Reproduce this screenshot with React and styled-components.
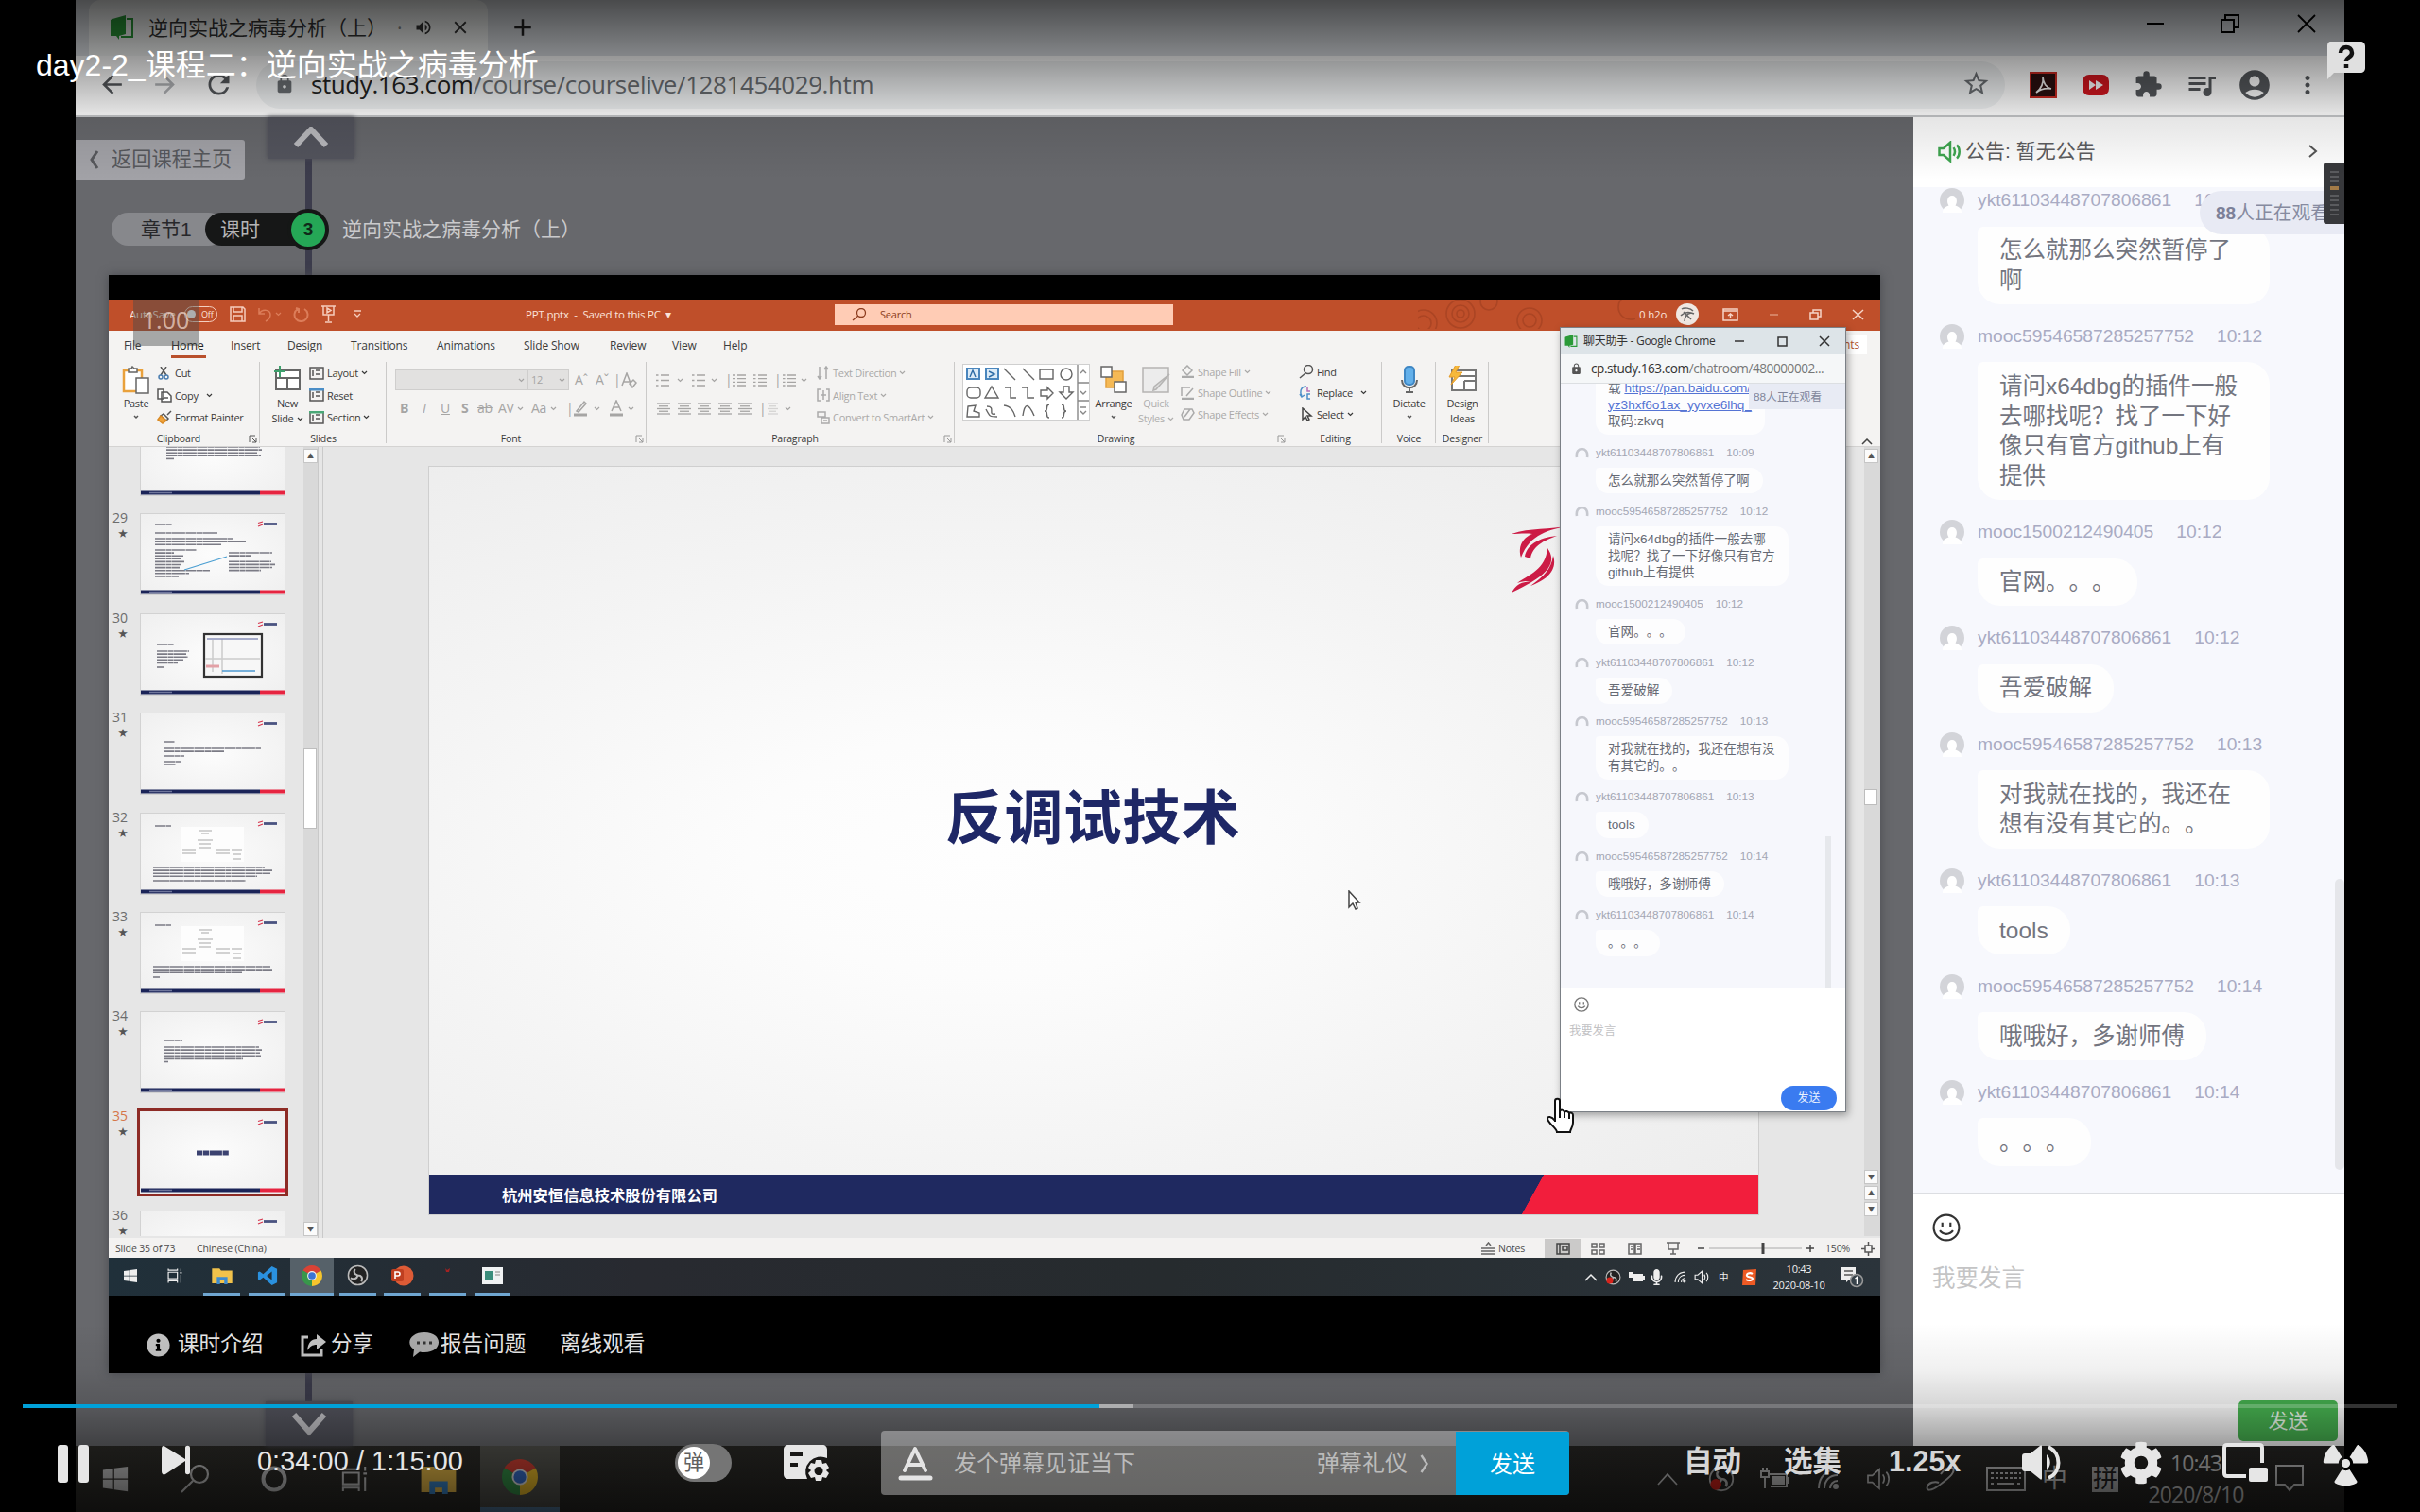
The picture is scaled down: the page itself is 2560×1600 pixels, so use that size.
import React from "react";
import styled, { createGlobalStyle, css } from "styled-components";
import {
  MdArrowBack, MdArrowForward, MdRefresh, MdLock, MdStarBorder, MdExtension,
  MdQueueMusic, MdAccountCircle, MdMoreVert, MdVolumeUp, MdClose, MdAdd,
} from "react-icons/md";
import { FaWindows, FaRadiation, FaCog, FaMicrophone, FaInfoCircle } from "react-icons/fa";

const sans = `"Liberation Sans", "Noto Sans CJK SC", sans-serif`;
const ui = `"Open Sans", "Noto Sans CJK SC", sans-serif`;

const Global = createGlobalStyle`
  html, body { margin: 0; background: #000; }
  * { box-sizing: border-box; }
  svg { display: block; flex: none; }
  body { font-family: ${sans}; text-spacing-trim: space-all; }
`;

/* Grid tracks whose columns begin at the given x values, measured from origin. */
const stops = (origin, xs) => css`
  display: grid;
  padding-left: ${xs[0] - origin}px;
  grid-template-columns: ${xs.slice(1).map((x, i) => `${x - xs[i]}px`).join(" ")} 1fr;
  align-items: center;
  white-space: nowrap;
`;

const Screen = styled.main`
  position: relative;
  width: 2560px;
  height: 1600px;
  overflow: hidden;
  background: #000;
  line-height: 1;
`;
const Video = styled.section`
  width: 2400px;
  height: 1600px;
  margin: 0 auto;
  display: flex;
  flex-direction: column;
  overflow: hidden;
`;

/* ---------- outer browser ---------- */
const TabStrip = styled.div`
  height: 59px;
  flex: none;
  display: flex;
  justify-content: space-between;
  background: #dee1e6;
  color: #222;
`;
const BrowserTab = styled.div`
  width: 422px;
  height: 59px;
  margin-left: 14px;
  border-radius: 12px 12px 0 0;
  background: #f6f8f7;
  font: 21px/24px ${ui};
  color: #333;
  ${() => stops(94, [116, 157, 420, 438, 476])}
  padding-bottom: 1px;
`;
const Faint = styled.span`color: #888;`;
const TabGroup = styled.div`display: flex; align-items: center;`;
const NewTab = styled.span`margin-left: 22px; margin-bottom: 2px;`;
const WindowButtons = styled.div`
  width: 212px;
  height: 50px;
  ${() => stops(2268, [2271, 2349, 2430])}
`;
const Toolbar = styled.div`
  height: 65px;
  flex: none;
  padding-bottom: 2px;
  background: #fff;
  border-bottom: 2px solid #c6c8ca;
  color: #55585c;
  ${() => stops(80, [103, 159, 215, 271, 2141, 2199, 2257, 2311, 2366, 2426])}
`;
const Omnibox = styled.div`
  width: 1850px;
  height: 50px;
  border-radius: 25px;
  background: #f1f3f4;
  padding: 0 15px 2px 19px;
  display: flex;
  align-items: center;
  font: 26px/30px ${ui};
  letter-spacing: -0.42px;
  color: #6b6f73;
  b { font-weight: 400; color: #222; margin-left: 17px; }
  svg:last-child { margin-left: auto; }
`;

/* ---------- course page ---------- */
const Page = styled.div`height: 1406px; display: flex; flex: none;`;
const Lesson = styled.div`
  position: relative;
  width: 1944px;
  height: 1406px;
  background: #67686c;
  display: flex;
  flex-direction: column;
`;
const TimeLine = styled.i`
  position: absolute;
  left: 243px;
  top: 0;
  width: 7px;
  height: 1360px;
  background: #3c3c4c;
`;
const LessonTop = styled.div`position: relative; display: flex; height: 101px; flex: none;`;
const BackButton = styled.div`
  width: 179px;
  height: 42px;
  margin-top: 24px;
  padding-left: 14px;
  display: flex;
  align-items: center;
  gap: 13px;
  border-radius: 0 3px 3px 0;
  background: #a2a2a7;
  color: #57585c;
  font: 21.2px/24px ${sans};
  white-space: nowrap;
`;
const ArrowTab = styled.div`
  width: 92px;
  height: ${(p) => p.$h}px;
  margin: ${(p) => p.$mt || 0}px 0 0 ${(p) => p.$ml}px;
  display: grid;
  place-items: center;
  background: #53545d;
  box-shadow: 0 0 5px #4b4c54;
`;
const Crumbs = styled.div`
  position: relative;
  height: 66px;
  flex: none;
  padding-left: 38px;
  display: flex;
  font: 21px/35px ${sans};
  white-space: nowrap;
`;
const Chapter = styled.span`
  width: 120px;
  height: 35px;
  padding-left: 31px;
  border-radius: 18px;
  background: #87888c;
  color: #27272a;
`;
const Period = styled.span`
  width: 110px;
  height: 35px;
  margin-left: -21px;
  padding-left: 16px;
  border-radius: 18px 0 0 18px;
  background: #161717;
  color: #b4b4b6;
`;
const Step = styled.span`
  width: 44px;
  height: 44px;
  margin: -4px 0 0 -23px;
  border: 4px solid #151716;
  border-radius: 50%;
  background: #25a756;
  color: #10291a;
  font: bold 19px/36px ${sans};
  text-align: center;
`;
const CrumbTitle = styled.span`margin-left: 14px; color: #cacacc;`;

const Player = styled.div`
  position: relative;
  width: 1874px;
  height: 1162px;
  flex: none;
  margin-left: 35px;
  padding-top: 26px;
  background: #000;
  box-shadow: 0 0 10px #4a4b50;
`;
const PlayerFooter = styled.div`
  height: 82px;
  margin-top: 11px;
  font: 22.6px/26px ${sans};
  color: #e8e8e8;
  ${() => stops(115, [155, 188, 317, 350, 433, 466, 592])}
`;

/* ---------- PowerPoint ---------- */
const Ppt = styled.div`height: 1054px; display: flex; flex-direction: column; font-family: ${ui}; overflow: hidden;`;
const PptTitle = styled.div`
  height: 33px;
  flex: none;
  padding-bottom: 2px;
  background: #bf4f2a;
  color: #fbe3da;
  font-size: 11.5px;
  letter-spacing: -0.2px;
  ${() => stops(115, [137, 195, 243, 272, 291, 310, 340, 374, 556, 883, 1500, 1734, 1773, 1822, 1871, 1914, 1959])}
`;
const Toggle = styled.span`
  width: 35px;
  height: 17px;
  border: 1.5px solid #f4cfc0;
  border-radius: 9px;
  display: flex;
  align-items: center;
  gap: 6px;
  padding-left: 2px;
  font-size: 9px;
  i { width: 9px; height: 9px; border-radius: 50%; background: #fff; }
`;
const SearchBox = styled.span`
  width: 358px;
  height: 22px;
  background: #ffccb5;
  color: #8d3d20;
  display: flex;
  align-items: center;
  gap: 14px;
  padding-left: 18px;
  font-size: 11px;
`;
const PptTabs = styled.div`
  height: 31px;
  flex: none;
  background: #f4f3f2;
  color: #3c3c3c;
  font-size: 12px;
  letter-spacing: -0.15px;
  padding-bottom: 2px;
  ${() => stops(115, [131, 181, 244, 304, 371, 462, 554, 645, 711, 765, 1888])}
`;
const PptTab = styled.span`
  height: 28px;
  line-height: 29px;
  justify-self: start;
  border-bottom: 3px solid ${(p) => (p.$on ? "#b9502c" : "transparent")};
  ${(p) => p.$on && "color:#222; width:37px; font-size:12.5px;"}
`;
const Comments = styled.span`
  width: 87px;
  padding: 4px 8px;
  text-align: right;
  background: #fff;
  color: #b4532f;
`;
const Ribbon = styled.div`
  height: 92px;
  flex: none;
  display: flex;
  padding-top: 2px;
  background: #f4f3f2;
  border-bottom: 1px solid #d4d3d2;
  font-size: 11px;
  letter-spacing: -0.3px;
  color: #3a3a3a;
`;
const Group = styled.div`
  width: ${(p) => p.$w}px;
  flex: none;
  height: 90px;
  display: flex;
  flex-direction: column;
  background: linear-gradient(#cbcac9, #cbcac9) right top / 1px 86px no-repeat;
`;
const GroupBody = styled.div`height: 74px; display: flex; padding-left: ${(p) => p.$pl || 0}px;`;
const GroupLabel = styled.div`
  height: 15px;
  line-height: 15px;
  font-size: 10.5px;
  letter-spacing: -0.15px;
  display: flex;
  align-items: center;
  justify-content: ${(p) => (p.$launch ? "space-between" : "center")};
  padding-right: ${(p) => (p.$launch ? 3 : 0)}px;
  &::before { content: ""; display: ${(p) => (p.$launch ? "block" : "none")}; }
`;
const Big = styled.div`
  width: ${(p) => p.$w}px;
  display: flex;
  flex-direction: column;
  align-items: center;
  padding-top: 4px;
  line-height: 16px;
  color: ${(p) => (p.$off ? "#b0afae" : "#3a3a3a")};
  white-space: nowrap;
`;
const BigIcon = styled.div`height: 32px;`;
const Stack = styled.div`
  margin-left: ${(p) => p.$ml}px;
  margin-top: ${(p) => p.$mt || 0}px;
  display: grid;
  height: ${(p) => p.$h || 70.5}px;
  grid-template-rows: repeat(3, 1fr);
  color: ${(p) => (p.$off ? "#aaa9a8" : "#3a3a3a")};
`;
const Command = styled.div`
  display: flex;
  align-items: center;
  gap: ${(p) => p.$gap || 3}px;
  white-space: nowrap;
`;
const IconRows = styled.div`
  width: ${(p) => p.$w}px;
  padding-top: 8px;
  display: flex;
  flex-direction: column;
  gap: 8px;
  color: #a6a5a4;
`;
const FontRow = styled.div`height: 22px; font-size: 14px; ${(p) => stops(p.$from, p.$at)}`;
const Combo = styled.span`
  height: 22px;
  width: ${(p) => p.$w}px;
  background: #e2e1e0;
  border: 1px solid #cfcecd;
  font-size: 11px;
  line-height: 20px;
  padding: 0 3px;
  display: flex;
  align-items: center;
  justify-content: space-between;
`;
const ShapeBox = styled.div`width: 135px; height: 60px; margin-top: 2px; background: #fff; border: 1px solid #cfcfcf;`;

const Work = styled.div`height: 837px; flex: none; display: flex; background: #e6e6e6; overflow: hidden;`;
const Thumbs = styled.div`width: 206px; height: 835px; overflow: hidden;`;
const ThumbList = styled.div`margin-top: -34px;`;
const ThumbRow = styled.div`height: 105.4px; display: flex; padding-left: 4px;`;
const ThumbNo = styled.div`
  width: 30px;
  font: 14px/14px ${ui};
  margin-top: -3px;
  color: ${(p) => (p.$on ? "#d5764a" : "#6c6c6c")};
  span { display: block; padding: 3px 0 0 6px; font-size: 10px; line-height: 12px; color: #555; }
`;
const ThumbFrame = styled.div`
  width: 152px;
  height: 85px;
  background: radial-gradient(#fcfcfc, #efefef);
  box-shadow: ${(p) => (p.$on ? "0 0 0 1px #eee, 0 0 0 4px #8d2b25" : "0 0 0 1px #d2d2d2")};
`;
const ScrollTrack = styled.div`
  width: ${(p) => p.$w}px;
  height: 835px;
  padding-top: 2px;
  background: #d9d9d9;
  display: flex;
  flex-direction: column;
`;
const ScrollKey = styled.div`
  height: 15px;
  width: 15px;
  margin-top: ${(p) => p.$mt || 0}px;
  background: #fbfbfb;
  border: 1px solid #c6c6c6;
  display: grid;
  place-items: center;
  font-size: 7px;
  color: #555;
`;
const ScrollThumb = styled.div`
  width: 14px;
  height: ${(p) => p.$h}px;
  margin-top: ${(p) => p.$mt}px;
  background: #fff;
  border: 1px solid #bdbdbd;
`;
const Splitter = styled.div`width: 6px; border: solid #c9c9c9; border-width: 0 1px; margin: 0;`;
const Canvas = styled.div`width: 1630px; padding: 21px 0 0 112px;`;
const Slide = styled.div`
  width: 1406px;
  height: 791px;
  display: flex;
  flex-direction: column;
  background: radial-gradient(ellipse at 42% 52%, #fefefe 0%, #fcfcfc 22%, #f4f4f4 55%, #ebebeb 100%);
  box-shadow: 0 0 0 1px #cfcfcf;
`;
const SlideHead = styled.div`height: 140px; padding: 62px 0 0 1145px;`;
const SlideTitle = styled.h1`
  margin: 195px 0 0 546px;
  height: 64px;
  font: 700 62px/64px "Noto Sans CJK SC", sans-serif;
  color: #1e2766;
  letter-spacing: 0.4px;
`;
const SlideFoot = styled.div`
  height: 42px;
  margin-top: auto;
  padding-left: 77px;
  background: linear-gradient(119deg, #1f2960 0 1031px, #f21e3c 1031.6px);
  color: #fff;
  font: 700 16.3px/42px "Noto Sans CJK SC", sans-serif;
`;
const Status = styled.div`
  height: 21px;
  flex: none;
  padding-top: 1px;
  background: #f3f2f1;
  color: #4c4c4c;
  font-size: 10.5px;
  letter-spacing: -0.15px;
  ${() => stops(115, [122, 208, 1567, 1585, 1634, 1683, 1722, 1762, 1796, 1808, 1911, 1931, 1969])}
`;
const ViewOn = styled.span`width: 38px; height: 20px; background: #cbcac9; display: grid; place-items: center;`;
const InnerTaskbar = styled.div`
  height: 40px;
  flex: none;
  color: #eee;
  font-size: 10.5px;
  background: linear-gradient(90deg, #20303a, #282a30 30%, #262b2e 60%, #2b343b);
  ${() => stops(115, [115, 163, 215, 263, 307, 359, 406, 454, 502, 1674, 1698, 1722, 1744, 1771, 1792, 1818, 1842, 1870, 1947])}
`;
const TaskIcon = styled.span`
  width: ${(p) => p.$w || 39}px;
  height: 40px;
  display: grid;
  place-items: center;
  background: ${(p) => (p.$on ? "#566169" : "transparent")};
  border-bottom: 3px solid ${(p) => (p.$run ? "#6fa6d1" : "transparent")};
`;
const InnerClock = styled.span`width: 66px; text-align: center; line-height: 17px; letter-spacing: -0.25px; font-size: 11px;`;

/* ---------- floating chat window ---------- */
const Popup = styled.div`
  position: absolute;
  left: 1650px;
  top: 346px;
  width: 303px;
  height: 831px;
  display: flex;
  flex-direction: column;
  background: #fff;
  border: 1px solid #7b8086;
  box-shadow: 2px 3px 8px rgba(0, 0, 0, 0.35);
`;
const PopupBar = styled.div`
  height: 28px;
  flex: none;
  background: #dde4e8;
  color: #333;
  font: 12px/16px ${ui};
  letter-spacing: -0.3px;
  ${() => stops(1651, [1655, 1675, 1834, 1880, 1924])}
`;
const PopupUrl = styled.div`
  height: 31px;
  flex: none;
  background: #f5f7f8;
  border-bottom: 1px solid #dcdfe2;
  color: #777;
  font: 13.6px/18px ${ui};
  letter-spacing: -0.45px;
  ${() => stops(1651, [1661, 1683])}
  b { font-weight: 400; color: #333; }
`;
const PopupChat = styled.div`position: relative; height: 639px; flex: none; overflow: hidden; background: #f6f7fc;`;
const PopupList = styled.div`margin: -9px 0 0 37px;`;
const SmallHead = styled.div`
  height: 14px;
  margin: 0 0 9px -22px;
  display: flex;
  align-items: center;
  gap: 7px;
  font: 11.75px/14px ${sans};
  color: #a3a6b3;
  white-space: nowrap;
  time { margin-left: 6px; }
`;
const SmallBubble = styled.div`
  width: max-content;
  padding: 5px 14px 5px 13px;
  margin-bottom: 11.6px;
  border-radius: 4px 14px 14px;
  background: #fdfdfe;
  color: #666a74;
  font: 13.6px/17.7px ${sans};
  white-space: pre;
  u { color: #5574d4; }
`;
const PopupBadge = styled.div`
  position: absolute;
  right: 0;
  top: 0;
  width: 102px;
  height: 27px;
  padding-left: 5px;
  background: #e8ebf4;
  color: #81869a;
  font: 11.8px/28px ${sans};
`;
const PopupThumb = styled.i`position: absolute; right: 15px; bottom: 0; width: 6px; height: 160px; background: #e6e8ec;`;
const PopupInput = styled.div`
  flex: 1;
  border-top: 1px solid #d6dbe0;
  padding: 9px 9px 1px;
  display: flex;
  flex-direction: column;
  font: 12.3px/14px ${sans};
  color: #c2c2c4;
  svg { margin: 0 0 13px 5px; }
`;
const PopupSend = styled.div`
  align-self: flex-end;
  margin-top: auto;
  width: 59px;
  height: 26px;
  border-radius: 13px;
  background: #3a7bf0;
  color: #eaf2ff;
  font: 12px/26px ${sans};
  text-align: center;
`;

/* ---------- side chat ---------- */
const Side = styled.aside`width: 456px; height: 1406px; display: flex; flex-direction: column; background: #fff;`;
const Notice = styled.div`
  height: 74px;
  flex: none;
  padding-bottom: 2px;
  font: 21px/24px ${sans};
  color: #5d5d60;
  ${() => stops(2024, [2048, 2079, 2441])}
`;
const Feed = styled.div`
  position: relative;
  height: 1066px;
  flex: none;
  padding: 2px 0 0 68px;
  background: #f7f8fd;
  border-bottom: 2px solid #dcdee2;
`;
const Head = styled.div`
  height: 24px;
  margin: 0 0 15.5px -40px;
  display: flex;
  align-items: center;
  gap: 14px;
  font: 19.25px/24px ${sans};
  color: #a9abc3;
  white-space: nowrap;
  time { margin-left: 10px; }
`;
const Bubble = styled.div`
  width: ${(p) => (p.$wide ? "309px" : "max-content")};
  padding: 9.5px 23px 9.5px 23px;
  margin-bottom: 22px;
  border-radius: 6px 24px 24px 24px;
  background: #fefefe;
  color: #73757f;
  font: 24.5px/31.7px ${sans};
  white-space: pre;
`;
const Viewers = styled.div`
  position: absolute;
  right: 0;
  top: 4px;
  width: 153px;
  height: 46px;
  padding-left: 17px;
  border-radius: 23px 0 0 23px;
  background: #e8eaf4;
  color: #868aa0;
  font: 19.8px/46px ${sans};
  white-space: nowrap;
  overflow: hidden;
  b { font-size: 19px; color: #7c8098; }
`;
const FeedThumb = styled.i`
  position: absolute;
  right: 0;
  top: 732px;
  width: 10px;
  height: 308px;
  border-radius: 5px;
  background: #e5e6ea;
`;
const Composer = styled.div`
  flex: 1;
  padding: 20px 7px 5px 20px;
  display: flex;
  flex-direction: column;
  font: 24.5px/30px ${sans};
  color: #c4c4c5;
  svg { margin-bottom: 24px; }
`;
const SendGreen = styled.div`
  align-self: flex-end;
  margin-top: auto;
  width: 105px;
  height: 43px;
  border-radius: 5px;
  background: #48b652;
  color: #f0fff0;
  font: 21px/43px ${sans};
  text-align: center;
`;
const Meter = styled.div`
  position: absolute;
  left: 2458px;
  top: 172px;
  width: 22px;
  height: 65px;
  padding: 8px 0 0 7px;
  border-radius: 3px 0 0 3px;
  background: #37383b;
`;

/* ---------- outer Windows taskbar ---------- */
const Taskbar = styled.div`
  height: 70px;
  flex: none;
  background: linear-gradient(90deg, #2e2d29, #272624);
  color: #c9c9c9;
  ${() => stops(80, [107, 191, 276, 359, 445, 508, 1752, 1807, 1861, 1922, 1973, 2037, 2101, 2160, 2213, 2270, 2407])}
`;
const ChromeTask = styled.span`
  width: 84px;
  height: 70px;
  display: grid;
  place-items: center;
  background: #55554f;
  border-bottom: 5px solid #5b86ad;
`;
const Ime = styled.span`font: 27px/30px ${sans};`;
const ImeBox = styled.span`width: 28px; height: 27px; background: #b5b5b5; color: #222; font: 26px/27px ${sans}; text-align: center;`;
const Clock = styled.span`width: 106px; font: 23px/33px ${ui}; letter-spacing: -0.9px; text-align: center;`;

/* ---------- player overlay ---------- */
const ShadeTop = styled.div`
  position: absolute;
  left: 0; top: 0; right: 0;
  height: 190px;
  background: linear-gradient(rgba(0,0,0,.67), rgba(0,0,0,.4) 32%, rgba(0,0,0,.11) 63%, rgba(0,0,0,0));
`;
const ShadeBottom = styled.div`
  position: absolute;
  left: 0; bottom: 0; right: 0;
  height: 200px;
  background: linear-gradient(rgba(0,0,0,0), rgba(0,0,0,.06) 25%, rgba(0,0,0,.17) 45%, rgba(0,0,0,.38) 65%, rgba(0,0,0,.68));
`;
const VideoTitle = styled.div`position: absolute; left: 38px; top: 50px; font: 32px/38px ${sans}; color: #fff; white-space: nowrap;`;
const Help = styled.div`position: absolute; left: 2460px; top: 43px;`;
const Rate = styled.div`
  position: absolute;
  left: 141px;
  top: 317px;
  width: 69px;
  height: 49px;
  background: rgba(70, 75, 75, 0.45);
  color: rgba(255, 235, 225, 0.65);
  font: 25px/42px ${ui};
  text-align: center;
`;
const Controls = styled.div`
  position: absolute;
  left: 0;
  right: 0;
  bottom: 0;
  height: 114px;
`;
const Progress = styled.div`
  height: 4px;
  margin: 0 24px;
  display: flex;
  background: rgba(255, 255, 255, 0.2);
`;
const Played = styled.i`width: 1139px; background: #00a1d9;`;
const Buffered = styled.i`width: 36px; background: rgba(255, 255, 255, 0.4);`;
const Buttons = styled.div`
  height: 68px;
  margin-top: 24px;
  color: #e6e6e6;
  ${() => stops(0, [61, 170, 272, 714, 829, 932, 1781, 1887, 1998, 2137, 2242, 2350, 2457])}
`;
const Time = styled.span`font: 28.8px/34px ${sans}; letter-spacing: 0.1px; margin-bottom: 5px;`;
const Danmu = styled.span`
  width: 60px;
  height: 40px;
  padding: 3px;
  border-radius: 20px;
  background: #757575;
  i {
    display: block;
    width: 34px;
    height: 34px;
    border-radius: 50%;
    background: #fff;
    color: #606060;
    font: normal 22px/33px ${sans};
    text-align: center;
  }
`;
const DanmuBar = styled.div`
  width: 728px;
  height: 68px;
  border-radius: 4px;
  overflow: hidden;
  background: rgba(255, 255, 255, 0.36);
  color: #bbb;
  font: 24px/69px ${sans};
  ${() => stops(932, [950, 1009, 1393, 1501, 1540])}
`;
const SendBlue = styled.span`width: 120px; height: 68px; background: #00a1d9; color: #fff; text-align: center;`;
const Choice = styled.span`font: bold 30.5px/40px ${sans}; margin-bottom: 5px; color: #d6d6d6;`;

/* ---------- drawings ---------- */
const Draw = ({ w, h, vb, children, s = "none", f = "none", sw = 1.5 }) => (
  <svg width={w} height={h} viewBox={vb || `0 0 ${w} ${h}`} fill={f} stroke={s} strokeWidth={sw}>{children}</svg>
);
const Book = ({ w = 26, h = 26 }) => (
  <Draw w={w} h={h} vb="0 0 26 26">
    <path d="M3 4 17 0V20L10 22v4L7 22H1V5z" fill="#2a9a38" />
    <path d="M18 4h6v19H12" stroke="#2a9a38" strokeWidth="2" />
  </Draw>
);
const Caret = ({ c = "currentColor" }) => (
  <Draw w={7} h={5} s={c} sw={1.2}><path d="M1 1l2.5 2.5L6 1" /></Draw>
);
const Chevron = ({ w = 11, h = 20, sw = 3, s = "currentColor", left }) => (
  <Draw w={w} h={h} vb="0 0 11 20" s={s} sw={sw}><path d={left ? "M9 1 3 10l6 9" : "M2 1l6 9-6 9"} /></Draw>
);
const Launcher = ({ c = "#999" }) => (
  <Draw w={9} h={9} s={c} sw={1}><path d="M1 8V1h6M3 3l5 5M8 4v4H4" /></Draw>
);
const Chrome = ({ d }) => (
  <Draw w={d} h={d} vb="0 0 40 40">
    <path d="M20 20 2.7 10A20 20 0 0 1 37.3 10z" fill="#d94235" />
    <path d="M20 20 37.3 10A20 20 0 0 1 20 40z" fill="#f6c52c" />
    <path d="M20 20v20A20 20 0 0 1 2.7 10z" fill="#38974b" />
    <circle cx="20" cy="20" r="9" fill="#eee" /><circle cx="20" cy="20" r="7" fill="#3b74d4" />
  </Draw>
);
const Folder = ({ w, h }) => (
  <Draw w={w} h={h} vb="0 0 38 32">
    <path d="M0 2h14l3 4h21v24H0z" fill="#f1c24b" /><path d="M9 32V18h20v14h-6v-7h-8v7z" fill="#3d8bd0" />
  </Draw>
);
const Obs = ({ d, dot }) => (
  <Draw w={d} h={d} vb="0 0 24 24">
    <circle cx="12" cy="12" r="10.5" fill="#222" stroke="#bbb" strokeWidth="1.6" />
    <path d="M12 12c-4-1-5-4-3-7M12 12c4 0 6 3 4 7M12 12c-1 4-4 5-8 3" stroke="#bbb" strokeWidth="2.2" />
    {dot && <circle cx="7" cy="17" r="5" fill="#d8231b" />}
  </Draw>
);
const TaskView = ({ w, h }) => (
  <Draw w={w} h={h} vb="0 0 30 30" s="currentColor" sw={2.2}>
    <path d="M2 8h18v13H2zM2 1v3h18V1M2 29v-4h18v4M27 1v5M27 13v16M25 9h4" />
  </Draw>
);
const Smile = ({ d, c, sw = 2 }) => (
  <Draw w={d} h={d} vb="0 0 28 28" s={c} sw={sw}>
    <circle cx="14" cy="14" r="12.5" /><path d="M10 9v4M18 9v4M7.5 17c3 4.5 10 4.5 13 0" />
  </Draw>
);
const Avatar = ({ d }) => (
  <Draw w={d} h={d} vb="0 0 26 26">
    <circle cx="13" cy="13" r="13" fill="#d3d4d9" />
    <path d="M3 26c0-5 3-6 6.500-7.500C7 15 7.500 8 13 8s6 7 3.500 10.500c3.500 1.500 6.500 2.500 6.500 7.500z" fill="#fff" />
  </Draw>
);
const SmallAvatar = () => (
  <Draw w={15} h={12} s="#c6c8cf" sw={2.6}><path d="M2 11C1 5 4 2 7.500 2S14 5 13 11" /></Draw>
);
const Speaker = ({ w, h, s = "currentColor", sw = 2 }) => (
  <Draw w={w} h={h} vb="0 0 30 26" s={s} sw={sw}>
    <path d="M2 9h5l8-7v22l-8-7H2zM19 8c2 3 2 7 0 10M23 5c4 4 4 12 0 16" />
  </Draw>
);
const Wifi = ({ w }) => (
  <Draw w={w} h={w} vb="0 0 24 24" s="currentColor" sw={2}>
    <path d="M2 22C2 10 10 2 22 2M8 22c0-8 5-14 14-14M14 22c0-4 3-8 8-8" /><circle cx="20" cy="20" r="2" fill="currentColor" />
  </Draw>
);
const Lines = ({ n = 4, w = 14, bullet, c = "currentColor" }) => (
  <Draw w={w} h={15} s={c} sw={1.3}>
    {Array.from({ length: n }, (_, i) => {
      const y = 2 + (i * 11) / (n - 1);
      return <path key={i} d={bullet ? `M0 ${y}h2.500M5 ${y}h${w - 5}` : `M${i % 2 ? 2 : 0} ${y}h${i % 2 ? w - 4 : w}`} />;
    })}
  </Draw>
);
const Doc = ({ blue }) => (
  <Draw w={16} h={14} s="#555"><path d="M1 1h14v12H1zM4 4v6M7 4h5M7 8h5" />{blue && <path d="M0 1h16" stroke={blue} strokeWidth="3" />}</Draw>
);
const MiniLogo = () => (
  <>
    <path d="M124 9.500l5-1.500M124 13l5-2" stroke="#d5344c" strokeWidth="1.200" />
    <path d="M130 10.500h14" stroke="#4a5380" strokeWidth="2.800" />
  </>
);

const textLines = (x, y, rows, step = 3.1) =>
  rows.map((w, i) => <path key={i} d={`M${x} ${y + i * step}h${w}`} stroke="#7b7b85" strokeWidth="1.6" strokeDasharray="11 .5 6 .4 14 .6" />);

const Diagram = () => (
  <>
    <path d="M42 14h67v37H42z" fill="#fdfdfd" />
    <path d="M61 18h14M64 21h8M60 28h16M62 32h12M62 36h12M44 38h14M44 42h14M80 38h14M80 42h14M96 38h11M98 43h8M98 48h8" stroke="#d2d2d2" strokeWidth="2" />
  </>
);

const thumbs = [
  { no: "", body: textLines(27, 34, [99, 101, 96, 100, 8]) },
  { no: 29, body: <>{textLines(15, 11, [18])}{textLines(15, 20, [66])}{textLines(15, 26, [82, 96, 70])}{textLines(15, 38, [44, 20, 30, 27, 31, 28, 26, 58, 36, 25])}{textLines(93, 41, [46, 24, 0, 45, 49, 46, 34])}<path d="M46 59 91 45" stroke="#4b9fd2" strokeWidth="1.300" /></> },
  { no: 30, body: <>{textLines(17, 32, [18])}{textLines(17, 39, [34, 31, 33, 28, 22])}{textLines(17, 56, [8])}<rect x="67" y="21" width="61" height="45" fill="#f7f7f7" stroke="#333" strokeWidth="2.200" /><path d="M86 26v37M68 47h58M76 27v34" stroke="#ccc" /><path d="M70 26h54" stroke="#8c93bb" strokeWidth="1.500" /><path d="M86 60h35" stroke="#4c99d0" strokeWidth="1.500" /><path d="M69 55h14" stroke="#e3a1a6" strokeWidth="3" /></> },
  { no: 31, body: <>{textLines(24, 30, [12])}{textLines(24, 37, [103, 64])}{textLines(24, 45, [22])}{textLines(25, 51, [17, 12])}</> },
  { no: 32, body: <>{textLines(15, 13, [17])}<Diagram />{textLines(13, 57, [118, 126, 124, 110])}{textLines(13, 71, [98])}</> },
  { no: 33, body: <>{textLines(15, 13, [17])}<Diagram />{textLines(13, 57, [124, 126, 94])}{textLines(13, 68, [7])}</> },
  { no: 34, body: <>{textLines(24, 30, [20])}{textLines(24, 37, [101, 104, 102, 103, 84, 5])}</> },
  { no: 35, on: true, body: <path d="M59 43h34" stroke="#3b4270" strokeWidth="5" strokeDasharray="6.200 .7" /> },
  { no: 36, body: null },
];

const messages = [
  { who: "ykt61103448707806861", at: "10:09", wide: ["怎么就那么突然暂停了", "啊"], small: ["怎么就那么突然暂停了啊"] },
  { who: "mooc59546587285257752", at: "10:12", wide: ["请问x64dbg的插件一般", "去哪找呢？找了一下好", "像只有官方github上有", "提供"], small: ["请问x64dbg的插件一般去哪", "找呢？找了一下好像只有官方", "github上有提供"] },
  { who: "mooc1500212490405", at: "10:12", wide: ["官网。。。"] },
  { who: "ykt61103448707806861", at: "10:12", wide: ["吾爱破解"] },
  { who: "mooc59546587285257752", at: "10:13", wide: ["对我就在找的，我还在", "想有没有其它的。。"], small: ["对我就在找的，我还在想有没", "有其它的。。"] },
  { who: "ykt61103448707806861", at: "10:13", wide: ["tools"] },
  { who: "mooc59546587285257752", at: "10:14", wide: ["哦哦好，多谢师傅"] },
  { who: "ykt61103448707806861", at: "10:14", wide: ["。。。"] },
];

function Browser() {
  return (
    <>
      <TabStrip>
        <TabGroup>
          <BrowserTab>
            <Book /><span>逆向实战之病毒分析（上）</span><Faint>·</Faint><MdVolumeUp size={20} /><MdClose size={22} />
          </BrowserTab>
          <NewTab><MdAdd size={30} /></NewTab>
        </TabGroup>
        <WindowButtons>
          <Draw w={18} h={18} s="#000" sw={2}><path d="M0 9h18" /></Draw>
          <Draw w={20} h={20} s="#000" sw={2}><path d="M1 6h13v13H1zM5 6V1h14v13h-5" /></Draw>
          <Draw w={20} h={20} s="#000" sw={1.8}><path d="M1 1l18 18M19 1 1 19" /></Draw>
        </WindowButtons>
      </TabStrip>
      <Toolbar>
        <MdArrowBack size={31} /><MdArrowForward size={31} color="#b3b5b8" /><MdRefresh size={33} />
        <Omnibox>
          <MdLock size={22} /><b>study.163.com</b>/course/courselive/1281454029.htm<MdStarBorder size={31} />
        </Omnibox>
        <Draw w={40} h={28} vb="-6 0 40 28">
          <path d="M1 1h27v26H1z" fill="#2a0f0f" stroke="#c92a22" strokeWidth="2" />
          <path d="M7 22c5-4 8-10 7-17 0 7 4 12 9 13-6-1-11 0-16 4z" stroke="#eee" strokeWidth="1.700" />
        </Draw>
        <Draw w={36} h={24} vb="-4 0 36 24">
          <rect x="0" y="1" width="28" height="22" rx="7" fill="#d3161f" /><path d="M7 7l7 5-7 5zM14 7l8 5-8 5z" fill="#fff" />
        </Draw>
        <MdExtension size={31} /><MdQueueMusic size={36} /><MdAccountCircle size={38} /><MdMoreVert size={30} />
      </Toolbar>
    </>
  );
}

function TitleBar() {
  return (
    <PptTitle>
      <span>AutoSave</span>
      <Toggle><i />Off</Toggle>
      <Draw w={17} h={17} s="#f6cdbd"><path d="M1 1h13l2 2v13H1zM4 1v5h9V1M4 16v-6h9v6" /></Draw>
      <Draw w={17} h={17} s="#dc7d5a"><path d="M2 2v6h6M2 8c4-6 12-4 12 1 0 4-3 6-5 7" /></Draw>
      <Caret c="#dc7d5a" />
      <Draw w={17} h={17} s="#dc7d5a" sw={2}><path d="M12 3a7 7 0 1 1-7 0M3 2l3 1v4" /></Draw>
      <Draw w={15} h={19} s="#f6cdbd"><path d="M0 1h15M2 1v9h11V1M7.500 10v7M4 18h7M6 3l4 2.500-4 2.500z" /></Draw>
      <Draw w={8} h={9} s="#f6cdbd" sw={1.3}><path d="M0 1h8M1 4l3 3 3-3" /></Draw>
      <span>PPT.pptx&nbsp; -&nbsp; Saved to this PC &nbsp;▾</span>
      <SearchBox>
        <Draw w={16} h={14} s="#8d3d20" sw={1.3}><circle cx="10" cy="5" r="4.500" /><path d="M7 8l-6 5" /></Draw>Search
      </SearchBox>
      <Draw w={230} h={31} s="#ab4524" sw={1.6}>
        <circle cx="6" cy="25" r="14" /><circle cx="6" cy="25" r="8" /><circle cx="45" cy="15" r="15" /><circle cx="45" cy="15" r="9" /><circle cx="45" cy="15" r="4" />
        <circle cx="118" cy="22" r="13" /><circle cx="118" cy="22" r="7" /><circle cx="225" cy="8" r="13" /><circle cx="75" cy="2" r="9" />
      </Draw>
      <span>0 h2o</span>
      <Draw w={24} h={23}><ellipse cx="12" cy="11.500" rx="12" ry="11.500" fill="#f0e8e2" /><path d="M6 6c3-2 9-1 12 2M5 13c4-4 8-5 14-2M9 19c0-5 3-8 7-9M8 9l8 8" stroke="#666" /></Draw>
      <Draw w={17} h={14} s="#f6d5c8"><path d="M1 1h15v12H1zM1 3h15M8.500 11V6M6 8l2.500-2L11 8" /></Draw>
      <Draw w={12} h={12} s="#dc9377"><path d="M1 6h9" /></Draw>
      <Draw w={13} h={12} s="#f6d5c8"><path d="M1 4h8v7H1zM4 4V1h8v7H9" /></Draw>
      <Draw w={13} h={12} s="#f6d5c8"><path d="M1 1l11 10M12 1 1 11" /></Draw>
    </PptTitle>
  );
}

function RibbonBar() {
  return (
    <Ribbon>
      <Group $w={160}>
        <GroupBody $pl={8}>
          <Big $w={42}>
            <BigIcon><Draw w={30} h={30} s="#666"><path d="M2 5h19v22H2z" stroke="#e9a13c" strokeWidth="2.500" fill="#fff" /><path d="M7 7V3h3l1-2 2 2h3v4z" fill="#fff" /><path d="M15 13h13v16H15z" fill="#fff" /></Draw></BigIcon>
            <span>Paste</span><Draw w={8} h={12} s="#555"><path d="M2 5l2 2 2-2" /></Draw>
          </Big>
          <Stack $ml={1}>
            <Command $gap={4}><Draw w={15} h={14} s="#4a7db0"><path d="M4 0l6 9M10 0 4 9" stroke="#555" /><circle cx="4" cy="11" r="2" /><circle cx="10" cy="11" r="2" /></Draw>Cut</Command>
            <Command><Draw w={16} h={15} s="#555"><path d="M1 1h6v10H1zM5 4h6l4 4v6H5zM7 10h5" fill="#fff" /></Draw>Copy &nbsp;<Caret /></Command>
            <Command><Draw w={16} h={15} s="#555"><path d="M15 1l-4 4M7 4l5 5-2 2-6-5z" /><path d="M4 6l6 5-4 3-5-4z" fill="#f0a33b" stroke="#d98a25" /></Draw>Format Painter</Command>
          </Stack>
        </GroupBody>
        <GroupLabel $launch>Clipboard<Launcher c="#555" /></GroupLabel>
      </Group>
      <Group $w={134}>
        <GroupBody $pl={8}>
          <Big $w={42}>
            <BigIcon><Draw w={30} h={28} s="#666"><path d="M3 5h25v20H3zM3 13h25M15 13v12" fill="#fff" strokeWidth="2" /><path d="M7 0v12M1 6h12" stroke="#3da06c" strokeWidth="2" /></Draw></BigIcon>
            <span>New</span><Command>Slide <Caret /></Command>
          </Big>
          <Stack $ml={2}>
            <Command><Doc />Layout <Caret /></Command>
            <Command><Doc blue="#4b8ec7" />Reset</Command>
            <Command><Doc blue="#4aa877" />Section <Caret /></Command>
          </Stack>
        </GroupBody>
        <GroupLabel>Slides</GroupLabel>
      </Group>
      <Group $w={275}>
        <GroupBody>
          <IconRows $w={275}>
            <FontRow $from={409} $at={[418, 558, 608, 630, 649, 657]}>
              <Combo $w={141}><span /><Caret /></Combo><Combo $w={44}>12<Caret /></Combo>
              <span>Aˆ</span><span>Aˇ</span><span>|</span>
              <Draw w={17} h={17} s="currentColor"><path d="M1 14 6 1l5 13M3 10h6M9 12l4-4 3 3-4 5z" /></Draw>
            </FontRow>
            <FontRow $from={409} $at={[423, 447, 466, 488, 505, 527, 547, 562, 582, 599, 606, 628, 645, 664]}>
              <b>B</b><i>I</i><u>U</u><b>S</b><s>ab</s><span>AV</span><Caret /><span>Aa</span><Caret /><span>|</span>
              <Draw w={16} h={18} s="currentColor"><path d="M4 12l8-10 2 2-8 9z" /><path d="M1 16h14" strokeWidth="3" /></Draw><Caret />
              <Draw w={14} h={18} s="currentColor"><path d="M2 12 7 1l5 11M4 8h6" /><path d="M0 16h14" strokeWidth="3" /></Draw><Caret />
            </FontRow>
          </IconRows>
        </GroupBody>
        <GroupLabel $launch>Font<Launcher /></GroupLabel>
      </Group>
      <Group $w={326}>
        <GroupBody>
          <IconRows $w={180}>
            <FontRow $from={684} $at={[694, 716, 732, 752, 767, 775, 797, 819, 828, 847]}>
              <Lines n={3} bullet /><Caret /><Lines n={3} bullet /><Caret /><span>|</span><Lines bullet /><Lines bullet /><span>|</span><Lines bullet /><Caret />
            </FontRow>
            <FontRow $from={684} $at={[695, 717, 738, 760, 781, 803, 812, 830]}>
              <Lines n={5} /><Lines n={5} /><Lines n={5} /><Lines n={5} /><Lines n={5} /><span>|</span><Lines n={5} w={11} c="#d4d3d2" /><Caret />
            </FontRow>
          </IconRows>
          <Stack $ml={0} $off>
            <Command><Draw w={14} h={15} s="#aaa"><path d="M3 1v12M1 11l2 3 2-3M10 14V1M8 4l2-3 2 3" /></Draw>Text Direction <Caret /></Command>
            <Command><Draw w={14} h={14} s="#aaa"><path d="M4 1H1v12h3M10 1h3v12h-3M7 2v10M4 7h6" /></Draw>Align Text <Caret /></Command>
            <Command><Draw w={14} h={14} s="#aaa"><path d="M1 1h8v5H1zM5 7h8v6H5zM7 10h4" /></Draw>Convert to SmartArt <Caret /></Command>
          </Stack>
        </GroupBody>
        <GroupLabel $launch>Paragraph<Launcher /></GroupLabel>
      </Group>
      <Group $w={353}>
        <GroupBody $pl={8}>
          <ShapeBox>
            <Draw w={133} h={58} s="#666" sw={1.4}>
              <path d="M4 4h13v11H4zM24 4h13v11H24z" stroke="#4a86bd" fill="#dcebf7" strokeWidth="2" />
              <path d="M7 13l3-7 3 7M27 7l6 3-6 3" stroke="#2d6ba5" />
              <path d="M43 4l12 12M63 4l12 12M81 5h14v10H81z" /><circle cx="109" cy="10" r="6" />
              <rect x="4" y="24" width="14" height="11" rx="4" /><path d="M23 35l7-12 7 12zM44 24h6v11h6M62 24h6v11h7M82 27h7v-3l6 6-6 6v-3h-7zM106 23h6v6h4l-7 7-7-7h4z" />
              <path d="M5 44l8-1-2 6 6 2v4H4zM25 44c10 0 0 10 9 8M24 47c4 8 4 8 12 8M43 43c8 1 10 6 12 12M63 54c2-14 6-14 12 0M91 42c-5 0 0 7-5 7 5 0 0 7 5 7M104 42c5 0 0 7 5 7-5 0 0 7-5 7" />
              <path d="M121 0v58M121 19h12M121 38h12M124 9l3-3 3 3M124 28l3 3 3-3M124 45h6M124 49l3 3 3-3" stroke="#888" />
            </Draw>
          </ShapeBox>
          <Big $w={50}>
            <BigIcon><Draw w={28} h={29} s="#666"><path d="M6 6h18v17H6z" fill="#f5b955" stroke="#e2a03c" /><path d="M1 1h11v11H1zM15 17h12v11H15z" fill="#fff" /></Draw></BigIcon>
            <span>Arrange</span><Draw w={8} h={12} s="#555"><path d="M2 5l2 2 2-2" /></Draw>
          </Big>
          <Big $w={40} $off>
            <BigIcon><Draw w={30} h={30} s="#b5b4b3"><path d="M1 2h27v26H1z" fill="#ececec" /><path d="M29 9 15 25l-3 1 1-4z" fill="#ddd" /></Draw></BigIcon>
            <span>Quick</span><Command>Styles <Caret /></Command>
          </Big>
          <Stack $ml={6} $mt={-1} $h={67.5} $off>
            <Command><Draw w={15} h={14} s="#aaa"><path d="M7 1l5 5-5 5-5-5z" /><path d="M1 13h13" strokeWidth="2.500" /></Draw>Shape Fill <Caret /></Command>
            <Command><Draw w={15} h={14} s="#aaa"><path d="M10 1H1v9M13 2 6 10" /><path d="M1 13h13" strokeWidth="2.500" /></Draw>Shape Outline <Caret /></Command>
            <Command><Draw w={15} h={14} s="#aaa"><path d="M4 2h8l2 4-5 7H3L1 8zM4 10l6-8" /></Draw>Shape Effects <Caret /></Command>
          </Stack>
        </GroupBody>
        <GroupLabel $launch>Drawing<Launcher /></GroupLabel>
      </Group>
      <Group $w={99}>
        <GroupBody $pl={11}>
          <Stack $ml={0} $mt={-1} $h={67.5}>
            <Command><Draw w={16} h={15} s="#555"><circle cx="10" cy="5" r="4.500" /><path d="M7 9l-6 5" /></Draw>Find</Command>
            <Command><Draw w={16} h={15} s="#4c8fc8"><path d="M8 1C1 1 1 8 3 11M1 9l2 3 3-2M12 14H9V9h3" /><path d="M9 1v5h3" stroke="#b26fb5" /></Draw>Replace &nbsp;<Caret /></Command>
            <Command><Draw w={16} h={15} s="#444"><path d="M4 1v12l3-3 2 4 2-1-2-4h4z" /></Draw>Select <Caret /></Command>
          </Stack>
        </GroupBody>
        <GroupLabel>Editing</GroupLabel>
      </Group>
      <Group $w={57}>
        <GroupBody>
          <Big $w={57}>
            <BigIcon><Draw w={20} h={30} s="#666" sw={2}><rect x="5" y="1" width="10" height="19" rx="4" fill="#63b0ea" stroke="#3f87c4" /><path d="M2 15c0 11 16 11 16 0M10 23v5M6 28h8" /></Draw></BigIcon>
            <span>Dictate</span><Draw w={8} h={12} s="#555"><path d="M2 5l2 2 2-2" /></Draw>
          </Big>
        </GroupBody>
        <GroupLabel>Voice</GroupLabel>
      </Group>
      <Group $w={56}>
        <GroupBody>
          <Big $w={56}>
            <BigIcon><Draw w={32} h={28} s="#777" sw={2}><path d="M5 5h25v21H5zM5 11h25M18 16h12M18 16v10" fill="#fff" /><path d="M9-1 2 12h6L4 20 16 7H9l4-8z" fill="#f6b93b" stroke="#e39b2b" strokeWidth="1" /></Draw></BigIcon>
            <span>Design</span><span>Ideas</span>
          </Big>
        </GroupBody>
        <GroupLabel>Designer</GroupLabel>
      </Group>
      <Collapse><Draw w={12} h={7} s="#444"><path d="M1 6l5-5 5 5" /></Draw></Collapse>
    </Ribbon>
  );
}
const Collapse = styled.div`margin: 81px 0 0 auto; padding-right: 8px;`;

function Workspace() {
  return (
    <Work>
      <Thumbs>
        <ThumbList>
          {thumbs.map((t, i) => (
            <ThumbRow key={i}>
              <ThumbNo $on={t.on}>{t.no}{t.no && <span>★</span>}</ThumbNo>
              <ThumbFrame $on={t.on}>
                <Draw w={152} h={85}>
                  {t.body}<MiniLogo />
                  <path d="M0 82.500h126" stroke="#1b2458" strokeWidth="4" /><path d="M126 82.500h26" stroke="#e62440" strokeWidth="4" />
                  <path d="M9 82.500h24" stroke="#6f769c" strokeWidth="1.500" />
                </Draw>
              </ThumbFrame>
            </ThumbRow>
          ))}
        </ThumbList>
      </Thumbs>
      <ScrollTrack $w={15}>
        <ScrollKey>▲</ScrollKey><ScrollThumb $mt={302} $h={85} /><ScrollKey $mt={416}>▼</ScrollKey>
      </ScrollTrack>
      <Splitter />
      <Canvas>
        <Slide>
          <SlideHead>
            <Draw w={90} h={72} f="#cc1b45">
              <path d="M0 9C20 2 40 5 62 0 40 5 20 8 10 34 6 20 14 12 22 9 14 8 8 9 0 9zM14 33c2-12 14-20 34-22-14 5-26 11-28 24zM38 24c10 14 4 28-38 47 8-12 12-10 20-12-6 0-8 0-14 2 12-9 30-14 32-37zM44 32c4 12-2 24-24 32 14-10 22-18 24-32z" />
            </Draw>
          </SlideHead>
          <SlideTitle>反调试技术</SlideTitle>
          <SlideFoot>杭州安恒信息技术股份有限公司</SlideFoot>
        </Slide>
      </Canvas>
      <ScrollTrack $w={17}>
        <ScrollKey>▲</ScrollKey><ScrollThumb $mt={345} $h={17} /><ScrollKey $mt={386}>▼</ScrollKey><ScrollKey $mt={2}>▲</ScrollKey><ScrollKey $mt={2}>▼</ScrollKey>
      </ScrollTrack>
    </Work>
  );
}

function PowerPoint() {
  const tabs = ["File", "Home", "Insert", "Design", "Transitions", "Animations", "Slide Show", "Review", "View", "Help"];
  return (
    <Ppt>
      <TitleBar />
      <PptTabs>
        {tabs.map((t) => <PptTab key={t} $on={t === "Home"}>{t}</PptTab>)}
        <Comments>Comments</Comments>
      </PptTabs>
      <RibbonBar />
      <Workspace />
      <Status>
        <span>Slide 35 of 73</span><span>Chinese (China)</span>
        <Draw w={15} h={14} s="#666"><path d="M0 7h15M0 10h15M0 13h15M5 4l2.500-3L10 4" /></Draw><span>Notes</span>
        <ViewOn><Draw w={15} h={13} s="#444"><path d="M1 1h13v11H1zM4 1v11M7 4h5v4H7z" /></Draw></ViewOn>
        <Draw w={16} h={13} s="#666"><path d="M1 1h5v4H1zM9 1h5v4H9zM1 8h5v4H1zM9 8h5v4H9z" /></Draw>
        <Draw w={16} h={13} s="#666"><path d="M1 1h6v11H1zM8 1h6v11H8zM3 4h3M10 4h3M3 7h3M10 7h3" /></Draw>
        <Draw w={16} h={14} s="#666"><path d="M1 1h14M3 1v7h10V1M8 8v5M5 13h6" /></Draw>
        <Draw w={8} h={8} s="#444"><path d="M0 4h7" /></Draw>
        <Draw w={98} h={14} s="#aaa" sw={1}><path d="M0 7h98" /><path d="M57 1v12" stroke="#444" strokeWidth="3" /></Draw>
        <Draw w={8} h={8} s="#444"><path d="M0 4h8M4 0v8" /></Draw>
        <span>150%</span>
        <Draw w={15} h={15} s="#555"><path d="M4 4h7v7H4zM7.500 0v4M7.500 11v4M0 7.500h4M11 7.500h4" /></Draw>
      </Status>
      <InnerTaskbar>
        <TaskIcon $w={46}><FaWindows size={16} /></TaskIcon>
        <TaskIcon $w={44}><TaskView w={16} h={16} /></TaskIcon>
        <TaskIcon $run><Folder w={22} h={18} /></TaskIcon>
        <TaskIcon $run><Draw w={24} h={22} vb="0 0 24 24"><path d="M17 1l6 3v16l-6 3L7 14l-4 3-2-1V8l2-1 4 3zM17 7l-6 5 6 5z" fill="#2a91df" fillRule="evenodd" /></Draw></TaskIcon>
        <TaskIcon $run $on $w={46}><Chrome d={22} /></TaskIcon>
        <TaskIcon $run><Obs d={23} /></TaskIcon>
        <TaskIcon $run><Draw w={24} h={22}><circle cx="13" cy="11" r="10.500" fill="#dd5b36" /><rect x="0" y="4" width="13" height="13" rx="2" fill="#bf3f20" /><path d="M4 14V7h3a2 2 0 0 1 0 4H4" stroke="#fff" strokeWidth="1.600" /></Draw></TaskIcon>
        <TaskIcon $run><Draw w={8} h={16}><path d="M1 0l2 2 3-2-1 4H2z" fill="#a32222" /></Draw></TaskIcon>
        <TaskIcon $run $w={37}><Draw w={22} h={18}><path d="M0 0h22v18H0z" fill="#f0f2f3" /><path d="M3 4h8v10H3z" fill="#3b8d7c" /><path d="M14 5h5M14 8h5" stroke="#aaa" /></Draw></TaskIcon>
        <Draw w={16} h={12} s="#eee"><path d="M3 10l6-6 6 6" /></Draw>
        <Obs d={17} dot />
        <Draw w={18} h={14} f="#eee"><path d="M6 4h10v8H6zM1 2h4v6H1zM16 6h2v4h-2z" /></Draw>
        <FaMicrophone size={17} />
        <Wifi w={13} />
        <Speaker w={17} h={15} />
        <span>中</span>
        <Draw w={17} h={17}><path d="M2 1l14-1-1 17H1z" fill="#ee5a24" /><path d="M12 5c-3-2-7 0-6 2s6 1 6 3-4 3-7 1" stroke="#fff" strokeWidth="2" /></Draw>
        <InnerClock>10:43<br />2020-08-10</InnerClock>
        <Draw w={26} h={24}><path d="M1 2h15v13h-7l-3 3v-3H1z" fill="#eee" /><path d="M4 6h9M4 10h9" stroke="#555" /><circle cx="17" cy="16" r="6.500" fill="#37424a" stroke="#999" /><path d="M15.500 14l2-1.500V20" stroke="#fff" /></Draw>
      </InnerTaskbar>
    </Ppt>
  );
}

function ChatPopup() {
  return (
    <Popup>
      <PopupBar>
        <Book w={14} h={14} /><span>聊天助手 - Google Chrome</span>
        <Draw w={12} h={12} s="#333"><path d="M1 6h10" /></Draw>
        <Draw w={11} h={11} s="#333"><path d="M1 1h9v9H1z" /></Draw>
        <Draw w={12} h={12} s="#333"><path d="M1 1l10 10M11 1 1 11" /></Draw>
      </PopupBar>
      <PopupUrl><MdLock size={13} color="#555" /><span><b>cp.study.163.com</b>/chatroom/480000002...</span></PopupUrl>
      <PopupChat>
        <PopupList>
          <SmallBubble>{"载 "}<u>https://pan.baidu.com/</u>{"\n"}<u>yz3hxf6o1ax_yyvxe6lhq_</u>{"\n取码:zkvq"}</SmallBubble>
          {messages.map((m, i) => (
            <React.Fragment key={i}>
              <SmallHead><SmallAvatar />{m.who}<time>{m.at}</time></SmallHead>
              <SmallBubble>{(m.small || m.wide).join("\n")}</SmallBubble>
            </React.Fragment>
          ))}
        </PopupList>
        <PopupBadge>88人正在观看</PopupBadge>
        <PopupThumb />
      </PopupChat>
      <PopupInput>
        <Smile d={16} c="#777" sw={2.4} />我要发言
        <PopupSend>发送</PopupSend>
      </PopupInput>
    </Popup>
  );
}

const Cursor = styled.div`position: absolute; left: ${(p) => p.$x}px; top: ${(p) => p.$y}px;`;

function SideChat() {
  return (
    <Side>
      <Notice>
        <Speaker w={30} h={23} s="#3fa650" sw={2.8} /><span>公告: 暂无公告</span>
        <Draw w={11} h={14} s="#555" sw={2}><path d="M2 1l7 6-7 6" /></Draw>
      </Notice>
      <Feed>
        {messages.map((m, i) => (
          <React.Fragment key={i}>
            <Head><Avatar d={26} />{m.who}<time>{m.at}</time></Head>
            <Bubble $wide={m.wide.length > 1}>{m.wide.join("\n")}</Bubble>
          </React.Fragment>
        ))}
        <Viewers><b>88</b>人正在观看</Viewers>
        <FeedThumb />
      </Feed>
      <Composer>
        <Smile d={30} c="#333" />我要发言
        <SendGreen>发送</SendGreen>
      </Composer>
    </Side>
  );
}

function PlayerControls() {
  return (
    <Controls>
      <Progress><Played /><Buffered /></Progress>
      <Buttons>
        <Draw w={34} h={42} f="currentColor"><rect x="0" y="2" width="11" height="40" rx="3" /><rect x="22" y="2" width="11" height="40" rx="3" /></Draw>
        <Draw w={32} h={38} f="currentColor"><path d="M1 4c0-3 2-4 4-2l21 13V3c0-3 5-3 5 0v26c0 3-5 3-5 0V17L5 31c-2 1-4 0-4-3z" /></Draw>
        <Time>0:34:00 / 1:15:00</Time>
        <Danmu><i>弹</i></Danmu>
        <Draw w={50} h={40} f="currentColor">
          <path fillRule="evenodd" d="M5 1h36c3 0 5 2 5 5v9a16 16 0 0 0-21 22H5c-3 0-5-2-5-5V6c0-3 2-5 5-5zM7 9v4h13V9zM7 20v4h8v-4z" />
          <path fillRule="evenodd" d="M34 17h6l1 4 4-1 3 5-3 3 3 3-3 5-4-1-1 4h-6l-1-4-4 1-3-5 3-3-3-3 3-5 4 1zM37 24a4.500 4.500 0 1 0 .1 0z" />
        </Draw>
        <DanmuBar>
          <Draw w={37} h={38} s="#e4e4e4" sw={5}><path d="M7 26 18 3l11 23M11 20h14" strokeLinejoin="round" strokeLinecap="round" strokeWidth="4" /><path d="M3 34h31" strokeLinecap="round" /></Draw>
          <span>发个弹幕见证当下</span><span>弹幕礼仪</span><Chevron w={12} h={20} sw={2.4} />
          <SendBlue>发送</SendBlue>
        </DanmuBar>
        <Choice>自动</Choice><Choice>选集</Choice><Choice>1.25x</Choice>
        <Draw w={44} h={42} f="currentColor">
          <path d="M2 14c0-2 1-3 3-3h6L21 3c1-1 2-1 2 1v33c0 2-1 2-2 1l-10-8H5c-2 0-3-1-3-3z" />
          <path d="M28 12c5 5 5 12 0 17z" /><path d="M30 4c14 7 14 27 0 33" stroke="currentColor" strokeWidth="4" fill="none" />
        </Draw>
        <FaCog size={46} />
        <Draw w={52} h={44} s="currentColor" sw={4}>
          <path d="M43 22V6c0-2-1-3-3-3H6C4 3 3 4 3 6v27c0 2 1 3 3 3h20" /><rect x="29" y="27" width="20" height="15" rx="2" fill="currentColor" stroke="none" />
        </Draw>
        <FaRadiation size={49} />
      </Buttons>
    </Controls>
  );
}

export default function App() {
  return (
    <Screen>
      <Global />
      <Video>
        <Browser />
        <Page>
          <Lesson>
            <TimeLine />
            <LessonTop>
              <BackButton><Chevron left w={11} h={20} />返回课程主页</BackButton>
              <ArrowTab $h={44} $ml={24}><Draw w={38} h={24} s="#b9b9bd" sw={6}><path d="M3 20 19 3l16 17" /></Draw></ArrowTab>
            </LessonTop>
            <Crumbs>
              <Chapter>章节1</Chapter><Period>课时</Period><Step>3</Step>
              <CrumbTitle>逆向实战之病毒分析（上）</CrumbTitle>
            </Crumbs>
            <Player>
              <PowerPoint />
              <PlayerFooter>
                <FaInfoCircle size={25} color="#c4c4c4" /><span>课时介绍</span>
                <Draw w={30} h={26} s="#c4c4c4" sw={3}><path d="M9 5H3v19h20v-6" /><path d="M18 2l10 8-10 8v-5c-5 0-7 2-10 6 1-8 4-12 10-12z" fill="#c4c4c4" stroke="none" /></Draw><span>分享</span>
                <Draw w={32} h={28}><path d="M16 1c20 0 20 21 0 21-2 0-3 0-5-.5L4 27l1-8C-5 12 2 1 16 1z" fill="#ababab" /><path d="M8 12h3M14.500 12h3M21 12h3" stroke="#333" strokeWidth="3" /></Draw><span>报告问题</span>
                <span>离线观看</span>
              </PlayerFooter>
            </Player>
            <LessonTop>
              <ArrowTab $h={47} $mt={30} $ml={201}><Draw w={38} h={26} s="#c4c4c8" sw={6}><path d="M3 3l16 18L35 3" /></Draw></ArrowTab>
            </LessonTop>
          </Lesson>
          <SideChat />
        </Page>
        <Taskbar>
          <FaWindows size={30} />
          <Draw w={32} h={30} s="currentColor" sw={2.2}><circle cx="20" cy="10" r="9" /><path d="M13 17 1 29" /></Draw>
          <Draw w={30} h={30} s="currentColor" sw={4}><circle cx="14" cy="15" r="11.500" /></Draw>
          <TaskView w={32} h={28} />
          <Folder w={38} h={31} />
          <ChromeTask><Chrome d={38} /></ChromeTask>
          <Draw w={24} h={16} s="currentColor" sw={1.8}><path d="M2 14 12 3l10 11" /></Draw>
          <Obs d={28} dot />
          <Draw w={32} h={24} s="currentColor" sw={2}><path d="M9 7h20v13H12M29 11h2v5h-2M2 4h8v6H2zM4 0v4M8 0v4M6 10v12" /><path d="M14 10h12v7H14z" fill="currentColor" /></Draw>
          <Wifi w={24} />
          <Speaker w={30} h={24} sw={1.8} />
          <Draw w={32} h={26} s="currentColor" sw={2}><path d="M16 8c6-9 16-9 13-2-2 5-10 10-15 14-8 6-14 6-12 1 1-4 8-6 12-4" /></Draw>
          <Draw w={42} h={26} s="currentColor" sw={2}><path d="M1 1h40v24H1z" /><path d="M5 7h32M5 12h32M5 18h4M33 18h4" strokeDasharray="3 2" /><path d="M12 18h18" /></Draw>
          <Ime>中</Ime>
          <ImeBox>拼</ImeBox>
          <Clock>10:43<br />2020/8/10</Clock>
          <Draw w={31} h={30} s="currentColor" sw={2}><path d="M1 1h28v20h-9l-5 6-5-6H1z" /></Draw>
        </Taskbar>
      </Video>
      <ChatPopup />
      <Rate>1.00</Rate>
      <Cursor $x={1425} $y={942}>
        <Draw w={15} h={22} s="#444"><path d="M2 1v17l4-4 3 6 2-1-2-6h4z" fill="#fff" /></Draw>
      </Cursor>
      <Cursor $x={1635} $y={1161}>
        <Draw w={32} h={40} s="#111" sw={2}><path d="M10 26V4c0-3 5-3 5 0v11c1-2 4-2 5 1 1-2 4-1 5 1 2-1 4 0 4 2v8c0 5-3 7-3 10H12c0-4-9-9-10-14 0-3 4-3 8 2zM15 14v8M20 15v7M25 17v6" fill="#fff" /></Draw>
      </Cursor>
      <Meter>
        <Draw w={9} h={50} s="#5a5b5e" sw={2}><path d="M0 2h9M0 7h9M0 12h9M0 27h9M0 32h9M0 37h9M0 42h9M0 47h9" /><path d="M0 19h9" stroke="#a37b47" strokeWidth="4" /></Draw>
      </Meter>
      <ShadeTop />
      <ShadeBottom />
      <VideoTitle>day2-2_课程二：逆向实战之病毒分析</VideoTitle>
      <Help>
        <Draw w={44} h={42}>
          <path d="M6 1h31c3 0 5 2 5 5v23c0 3-2 5-5 5H9l-7 7V6c0-3 1-5 4-5z" fill="#e0e0e0" />
          <path d="M16 13c0-8 12-8 12 0 0 5-6 4-6 9M22 25v4" stroke="#111" strokeWidth="4.500" />
        </Draw>
      </Help>
      <PlayerControls />
    </Screen>
  );
}
